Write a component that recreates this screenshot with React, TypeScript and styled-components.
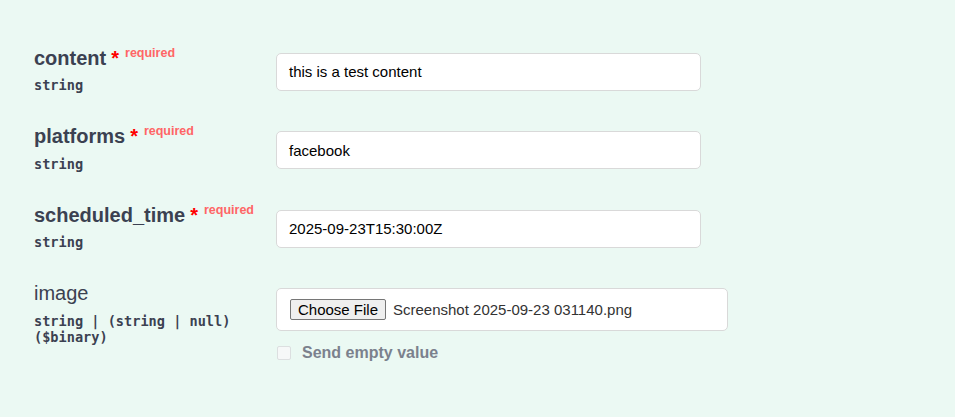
import styled, { createGlobalStyle } from 'styled-components';

const GlobalStyle = createGlobalStyle`
  html, body {
    margin: 0;
    padding: 0;
    background: #ebf9f3;
  }
  body {
    font-family: "Liberation Sans", Arial, sans-serif;
    color: #3b4151;
  }
`;

const Page = styled.div`
  width: 955px;
  height: 417px;
  background: #ebf9f3;
  padding: 33px 0 0 34px;
  box-sizing: border-box;
  overflow: hidden;
`;

const Row = styled.div`
  display: grid;
  grid-template-columns: 242px 451px;
  align-items: start;
  padding: 12.5px 0;
  height: 78.5px;
  box-sizing: border-box;
`;

const NameCell = styled.div`
  padding-right: 16px;
`;

const Name = styled.div<{ $required?: boolean }>`
  font-size: 20px;
  line-height: 25px;
  height: 25px;
  font-weight: ${(p) => (p.$required ? 700 : 400)};
  color: #3b4151;
  white-space: nowrap;
`;

const Star = styled.span`
  color: red;
  font-size: 20px;
  font-weight: 700;
  margin-left: 5px;
`;

const Required = styled.sup`
  color: #ff6666;
  font-size: 12.5px;
  font-weight: 600;
  line-height: 0;
  padding-left: 6px;
  position: relative;
  top: -8px;
  vertical-align: baseline;
`;

const Type = styled.div`
  font-family: "DejaVu Sans Mono", monospace;
  font-size: 13.6px;
  font-weight: 700;
  line-height: 16px;
  padding: 6.5px 0 6px;
  color: #3b4151;
`;

const TextInput = styled.div`
  margin-top: 7px;
  width: 425px;
  height: 38px;
  box-sizing: border-box;
  background: #fff;
  border: 1px solid #d9d9d9;
  border-radius: 5px;
  padding: 0 12px;
  display: flex;
  align-items: center;
  font-size: 15px;
  color: #000;
`;

const FileBox = styled.div`
  margin-top: 7px;
  width: 452px;
  height: 43px;
  box-sizing: border-box;
  background: #fff;
  border: 1px solid #d9d9d9;
  border-radius: 5px;
  padding: 0 13px;
  display: flex;
  align-items: center;
  gap: 7px;
  font-size: 15px;
  color: #333;
`;

const FileButton = styled.span`
  display: inline-flex;
  align-items: center;
  justify-content: center;
  width: 96px;
  height: 21px;
  box-sizing: border-box;
  background: #efefef;
  border: 1px solid #767676;
  border-radius: 2px;
  color: #000;
  font-size: 15px;
`;

const EmptyToggle = styled.label`
  display: flex;
  align-items: center;
  gap: 11px;
  margin-top: 13px;
  padding-left: 1px;
  font-size: 16px;
  font-weight: 700;
  color: #7b818d;
`;

const Box = styled.span`
  width: 14px;
  height: 14px;
  box-sizing: border-box;
  border: 1px solid #dcdfe0;
  border-radius: 2px;
  background: #f6f8f8;
`;

type Field = {
  name: string;
  type: string;
  value: string;
};

const fields: Field[] = [
  { name: 'content', type: 'string', value: 'this is a test content' },
  { name: 'platforms', type: 'string', value: 'facebook' },
  { name: 'scheduled_time', type: 'string', value: '2025-09-23T15:30:00Z' },
];

export default function App() {
  return (
    <Page>
      <GlobalStyle />
      {fields.map((f) => (
        <Row key={f.name}>
          <NameCell>
            <Name $required>
              {f.name}
              <Star>*</Star>
              <Required>required</Required>
            </Name>
            <Type>{f.type}</Type>
          </NameCell>
          <TextInput>{f.value}</TextInput>
        </Row>
      ))}
      <Row>
        <NameCell>
          <Name>image</Name>
          <Type>string | (string | null) ($binary)</Type>
        </NameCell>
        <div>
          <FileBox>
            <FileButton>Choose File</FileButton>
            Screenshot 2025-09-23 031140.png
          </FileBox>
          <EmptyToggle>
            <Box />
            Send empty value
          </EmptyToggle>
        </div>
      </Row>
    </Page>
  );
}
